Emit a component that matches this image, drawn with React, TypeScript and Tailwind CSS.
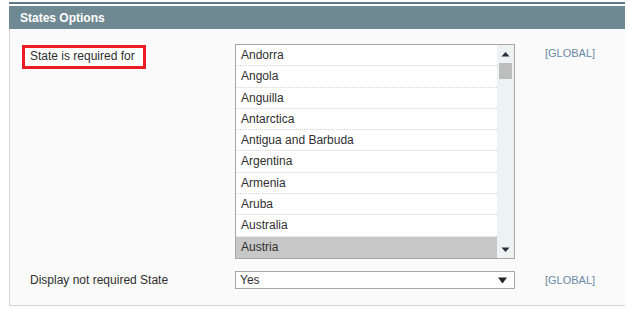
import React from "react";

const countries = [
  "Andorra",
  "Angola",
  "Anguilla",
  "Antarctica",
  "Antigua and Barbuda",
  "Argentina",
  "Armenia",
  "Aruba",
  "Australia",
  "Austria",
];

function ScrollBar() {
  return (
    <div className="w-[17px] shrink-0 bg-[#edf2f2] flex flex-col items-center pt-[5px]">
      <svg width="9" height="6" viewBox="0 0 9 6" className="mt-[1px]">
        <path d="M0.5 5.5 L4.5 1 L8.5 5.5 Z" fill="#2a2a3a" />
      </svg>
      <div className="mt-[6px] w-[13px] h-[16px] bg-[#bdbdbd]" />
      <div className="flex-1" />
      <svg width="9" height="6" viewBox="0 0 9 6" className="mb-[5px]">
        <path d="M0.5 0.5 L8.5 0.5 L4.5 5 Z" fill="#2a2a3a" />
      </svg>
    </div>
  );
}

export default function App() {
  return (
    <div
      className="w-[628px] h-[310px] bg-white overflow-hidden pt-[2px] pl-[9px] pr-[3px] text-[12px] text-[#2f2f2f]"
      style={{ fontFamily: '"Liberation Sans", Arial, sans-serif' }}
    >
      <div className="h-[2px] bg-[#5f7a83]" />
      <div className="h-[23px] mt-[2px] bg-[#6f8992] flex items-center pl-[11px]">
        <span className="text-white font-bold text-[12px]">States Options</span>
      </div>
      <div className="h-[277px] bg-[#fafafa] border-l border-b border-[#d6d6d6] pt-[15px]">
        <div className="flex">
          <div className="w-[225px] pl-[12px] pt-[1px]">
            <div className="w-[124px] border-[3px] border-[#ec1c24] bg-white pl-[5px] h-[24px] leading-[17px]">
              State is required for
            </div>
          </div>
          <div className="w-[280px] h-[215px] border border-[#aaa7a7] bg-white flex">
            <div className="flex-1 flex flex-col">
              {countries.map((c, i) => (
                <div
                  key={c}
                  className={`h-[21.4px] leading-[20px] pl-[5px] ${
                    i < countries.length - 1 ? "border-b border-dotted border-[#cfd3d3]" : ""
                  } ${i === countries.length - 1 ? "bg-[#c7c7c7]" : ""}`}
                >
                  {c}
                </div>
              ))}
            </div>
            <ScrollBar />
          </div>
          <div className="pl-[30px] pt-[1px] text-[#6a8aa6] text-[11px] leading-[16px]">[GLOBAL]</div>
        </div>
        <div className="flex mt-[12px] items-center">
          <div className="w-[225px] pl-[20px]">Display not required State</div>
          <div className="w-[280px] h-[18px] border border-[#aaa7a7] bg-white flex items-center pl-[4px] pr-[7px]">
            <span className="flex-1 leading-[16px]">Yes</span>
            <svg width="9" height="7" viewBox="0 0 9 7">
              <path d="M0 0.5 L9 0.5 L4.5 6.5 Z" fill="#222" />
            </svg>
          </div>
          <div className="pl-[30px] text-[#6a8aa6] text-[11px]">[GLOBAL]</div>
        </div>
      </div>
    </div>
  );
}
